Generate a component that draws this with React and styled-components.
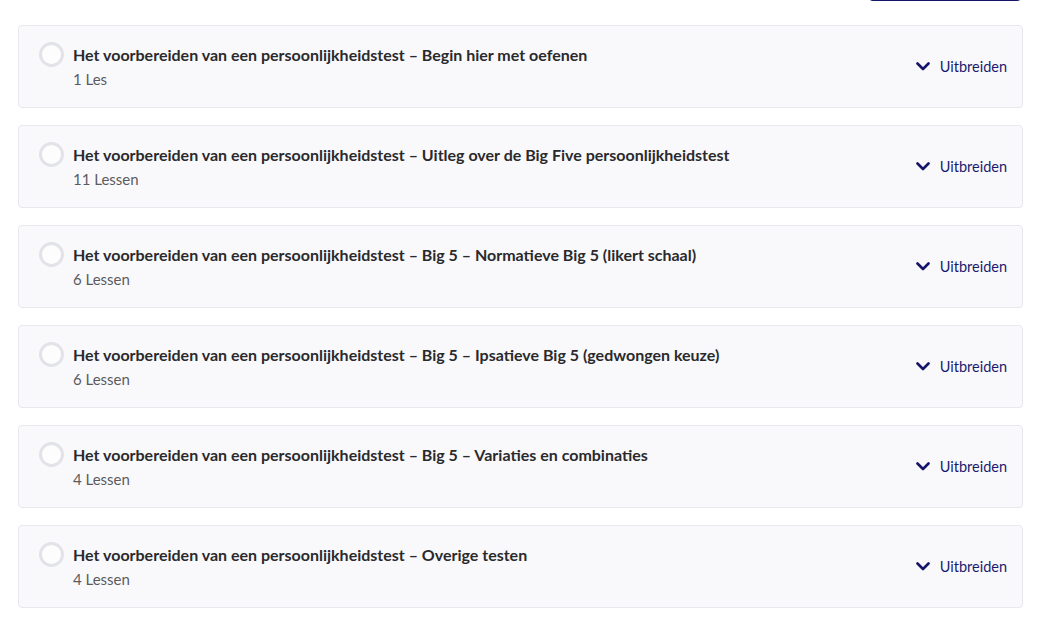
import React from "react";
import styled, { createGlobalStyle } from "styled-components";

const Global = createGlobalStyle`
  html, body { margin: 0; padding: 0; background: #ffffff; }
  body { font-family: "Lato", "Noto Sans", sans-serif; }
  * { box-sizing: border-box; }
`;

const Page = styled.div`
  padding: 0 15px 0 18px;
  overflow: hidden;
`;

const Toolbar = styled.div`
  display: flex;
  justify-content: flex-end;
  padding-right: 1px;
  margin-bottom: 24px;
`;

const TopButton = styled.button`
  width: 154px;
  height: 40px;
  margin-top: -39px;
  border: 2px solid #15156a;
  border-radius: 5px;
  background: #ffffff;
`;

const List = styled.div`
  display: flex;
  flex-direction: column;
  gap: 17px;
`;

const Card = styled.div`
  display: flex;
  align-items: center;
  justify-content: space-between;
  width: 1005px;
  padding: 16px 15px 17px 20px;
  background: #f9f9fc;
  border: 1px solid #e7e7ee;
  border-radius: 4px;
`;

const Left = styled.div`
  display: flex;
  align-items: flex-start;
  gap: 9px;
`;

const Check = styled.span`
  flex: none;
  width: 25px;
  height: 25px;
  border-radius: 50%;
  border: 3px solid #e1e3e8;
  background: #fdfdfe;
`;

const TextBlock = styled.div`
  display: flex;
  flex-direction: column;
  gap: 2px;
  padding-top: 2px;
`;

const Title = styled.div`
  font-size: 16px;
  line-height: 22px;
  font-weight: 700;
  color: #2a2a2c;
`;

const Sub = styled.div`
  font-size: 15px;
  line-height: 22px;
  color: #5b5b60;
`;

const Expand = styled.button`
  display: flex;
  align-items: center;
  gap: 10px;
  border: 0;
  background: transparent;
  padding: 0;
  font-family: inherit;
  font-size: 14.5px;
  color: #1b1b6e;
  cursor: pointer;
`;

const Chevron = () => (
  <svg width="14" height="9" viewBox="0 0 14 9" fill="none">
    <path d="M1.5 1.5 L7 7 L12.5 1.5" stroke="#15156a" strokeWidth="2.6" strokeLinecap="round" strokeLinejoin="round" />
  </svg>
);

const items = [
  ["Het voorbereiden van een persoonlijkheidstest – Begin hier met oefenen", "1 Les"],
  ["Het voorbereiden van een persoonlijkheidstest – Uitleg over de Big Five persoonlijkheidstest", "11 Lessen"],
  ["Het voorbereiden van een persoonlijkheidstest – Big 5 – Normatieve Big 5 (likert schaal)", "6 Lessen"],
  ["Het voorbereiden van een persoonlijkheidstest – Big 5 – Ipsatieve Big 5 (gedwongen keuze)", "6 Lessen"],
  ["Het voorbereiden van een persoonlijkheidstest – Big 5 – Variaties en combinaties", "4 Lessen"],
  ["Het voorbereiden van een persoonlijkheidstest – Overige testen", "4 Lessen"],
];

export default function App() {
  return (
    <>
      <Global />
      <Page>
        <Toolbar>
          <TopButton aria-label="knop" />
        </Toolbar>
        <List>
          {items.map(([t, s]) => (
            <Card key={t}>
              <Left>
                <Check />
                <TextBlock>
                  <Title>{t}</Title>
                  <Sub>{s}</Sub>
                </TextBlock>
              </Left>
              <Expand>
                <Chevron />
                Uitbreiden
              </Expand>
            </Card>
          ))}
        </List>
      </Page>
    </>
  );
}
